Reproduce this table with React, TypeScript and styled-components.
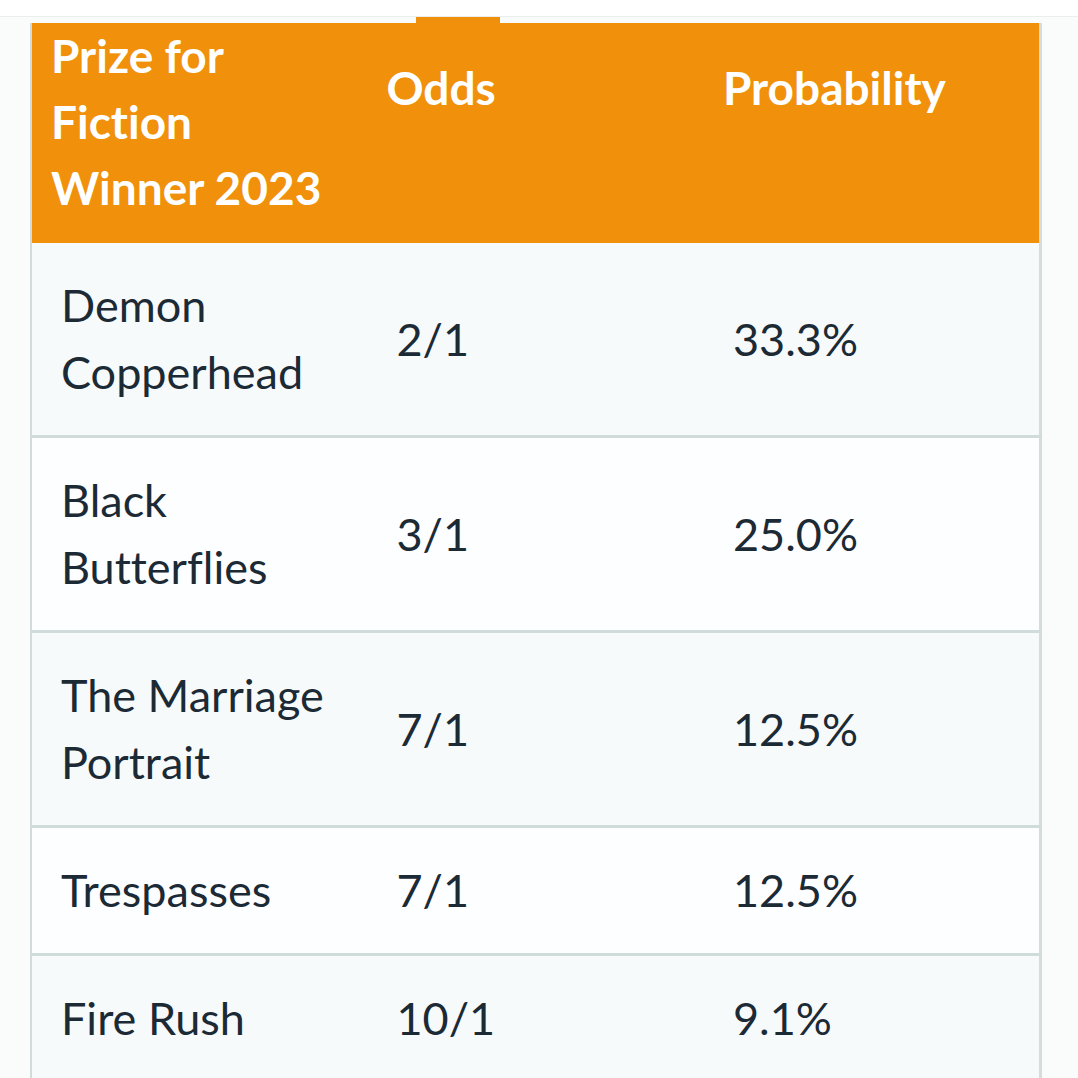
import React from "react";
import styled, { createGlobalStyle } from "styled-components";

const GlobalStyle = createGlobalStyle`
  html, body { margin: 0; padding: 0; background: #ffffff; }
  body {
    font-family: Lato, "Open Sans", "Liberation Sans", sans-serif;
    font-variant-ligatures: none;
  }
`;

const Page = styled.div`
  display: flex;
  flex-direction: column;
  width: 1078px;
  min-height: 1078px;
  background: #fafbfb;
`;

const TopBar = styled.div`
  height: 16px;
  background: #ffffff;
  border-bottom: 1px solid #eceeee;
`;

const TabRow = styled.div`
  display: flex;
  align-items: flex-end;
  height: 6px;
  padding-left: 416px;
`;

const TabIndicator = styled.div`
  width: 84px;
  height: 6px;
  background: #ef8f0b;
`;

const Content = styled.div`
  padding: 0 36px 0 30px;
`;

const Table = styled.table`
  width: 100%;
  border-collapse: collapse;
  table-layout: fixed;
  border-left: 2px solid #d2dbdb;
  border-right: 3px solid #d6dcdc;
`;

const HeadCell = styled.th<{ $offset?: number }>`
  background: #f0900b;
  color: #ffffff;
  font-weight: 700;
  font-size: 46px;
  line-height: 66px;
  text-align: left;
  vertical-align: top;
  padding: ${(p) => p.$offset ?? 0}px 18px 22px 19px;
`;

const Row = styled.tr<{ $alt: boolean }>`
  background: ${(p) => (p.$alt ? "#fdfeff" : "#f6fafb")};
  border-bottom: 3px solid #d0dcdc;
`;

const Cell = styled.td`
  color: #1c2a35;
  font-size: 45px;
  line-height: 67px;
  padding: 29px 28px 29px 29px;
  vertical-align: middle;
`;

const rows = [
  { name: "Demon Copperhead", odds: "2/1", prob: "33.3%" },
  { name: "Black Butterflies", odds: "3/1", prob: "25.0%" },
  { name: "The Marriage Portrait", odds: "7/1", prob: "12.5%" },
  { name: "Trespasses", odds: "7/1", prob: "12.5%" },
  { name: "Fire Rush", odds: "10/1", prob: "9.1%" },
];

export default function App() {
  return (
    <Page>
      <GlobalStyle />
      <TopBar />
      <TabRow>
        <TabIndicator />
      </TabRow>
      <Content>
        <Table>
          <thead>
            <tr>
              <HeadCell>
                Prize for
                <br />
                Fiction
                <br />
                Winner 2023
              </HeadCell>
              <HeadCell $offset={32}>Odds</HeadCell>
              <HeadCell $offset={32}>Probability</HeadCell>
            </tr>
          </thead>
          <tbody>
            {rows.map((r, i) => (
              <Row key={r.name} $alt={i % 2 === 1}>
                <Cell>{r.name}</Cell>
                <Cell>{r.odds}</Cell>
                <Cell>{r.prob}</Cell>
              </Row>
            ))}
          </tbody>
        </Table>
      </Content>
    </Page>
  );
}
